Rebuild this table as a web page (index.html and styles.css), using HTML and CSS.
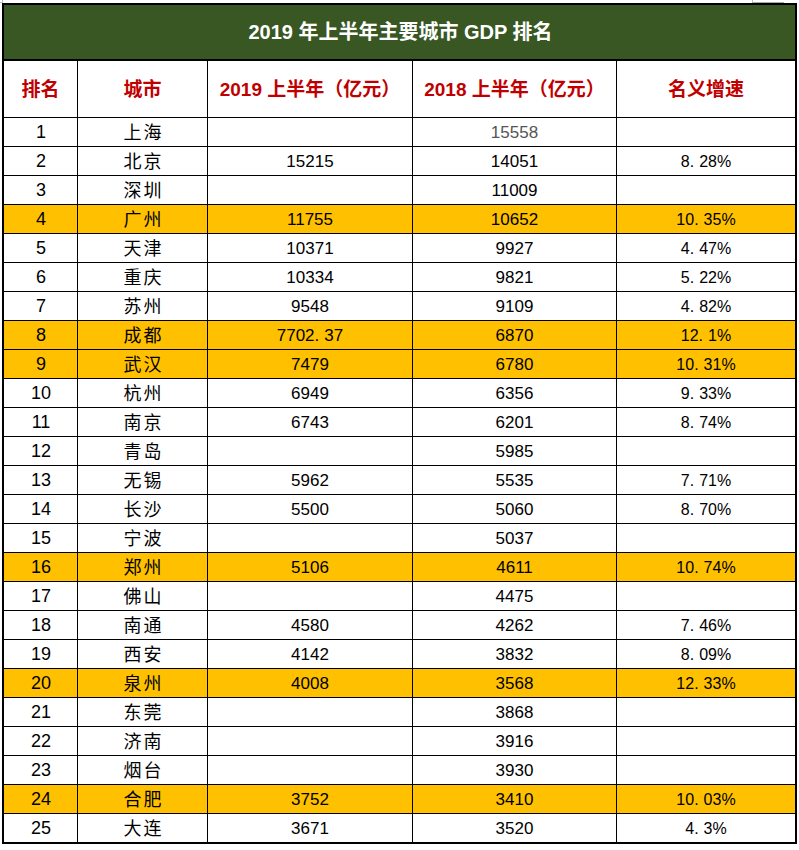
FILE: index.html
```html
<!DOCTYPE html>
<html lang="zh-CN">
<head>
<meta charset="utf-8">
<title>2019 年上半年主要城市 GDP 排名</title>
<link rel="stylesheet" href="styles.css">
</head>
<body>
<div class="mark-left"></div>
<div class="mark-right"></div>
<div class="sheet">
  <div class="title">2019 年上半年主要城市 GDP 排名</div>
  <div class="row head">
    <div class="cell">排名</div>
    <div class="cell">城市</div>
    <div class="cell">2019 上半年（亿元）</div>
    <div class="cell">2018 上半年（亿元）</div>
    <div class="cell">名义增速</div>
  </div>
  <div class="row"><div class="cell rank">1</div><div class="cell city">上海</div><div class="cell num"></div><div class="cell num gray">15558</div><div class="cell pct"></div></div>
  <div class="row"><div class="cell rank">2</div><div class="cell city">北京</div><div class="cell num">15215</div><div class="cell num">14051</div><div class="cell pct">8<span class="dot">.</span>28%</div></div>
  <div class="row"><div class="cell rank">3</div><div class="cell city">深圳</div><div class="cell num"></div><div class="cell num">11009</div><div class="cell pct"></div></div>
  <div class="row hl"><div class="cell rank">4</div><div class="cell city">广州</div><div class="cell num">11755</div><div class="cell num">10652</div><div class="cell pct">10<span class="dot">.</span>35%</div></div>
  <div class="row"><div class="cell rank">5</div><div class="cell city">天津</div><div class="cell num">10371</div><div class="cell num">9927</div><div class="cell pct">4<span class="dot">.</span>47%</div></div>
  <div class="row"><div class="cell rank">6</div><div class="cell city">重庆</div><div class="cell num">10334</div><div class="cell num">9821</div><div class="cell pct">5<span class="dot">.</span>22%</div></div>
  <div class="row"><div class="cell rank">7</div><div class="cell city">苏州</div><div class="cell num">9548</div><div class="cell num">9109</div><div class="cell pct">4<span class="dot">.</span>82%</div></div>
  <div class="row hl"><div class="cell rank">8</div><div class="cell city">成都</div><div class="cell num">7702<span class="dot">.</span>37</div><div class="cell num">6870</div><div class="cell pct">12<span class="dot">.</span>1%</div></div>
  <div class="row hl"><div class="cell rank">9</div><div class="cell city">武汉</div><div class="cell num">7479</div><div class="cell num">6780</div><div class="cell pct">10<span class="dot">.</span>31%</div></div>
  <div class="row"><div class="cell rank">10</div><div class="cell city">杭州</div><div class="cell num">6949</div><div class="cell num">6356</div><div class="cell pct">9<span class="dot">.</span>33%</div></div>
  <div class="row"><div class="cell rank">11</div><div class="cell city">南京</div><div class="cell num">6743</div><div class="cell num">6201</div><div class="cell pct">8<span class="dot">.</span>74%</div></div>
  <div class="row"><div class="cell rank">12</div><div class="cell city">青岛</div><div class="cell num"></div><div class="cell num">5985</div><div class="cell pct"></div></div>
  <div class="row"><div class="cell rank">13</div><div class="cell city">无锡</div><div class="cell num">5962</div><div class="cell num">5535</div><div class="cell pct">7<span class="dot">.</span>71%</div></div>
  <div class="row"><div class="cell rank">14</div><div class="cell city">长沙</div><div class="cell num">5500</div><div class="cell num">5060</div><div class="cell pct">8<span class="dot">.</span>70%</div></div>
  <div class="row"><div class="cell rank">15</div><div class="cell city">宁波</div><div class="cell num"></div><div class="cell num">5037</div><div class="cell pct"></div></div>
  <div class="row hl"><div class="cell rank">16</div><div class="cell city">郑州</div><div class="cell num">5106</div><div class="cell num">4611</div><div class="cell pct">10<span class="dot">.</span>74%</div></div>
  <div class="row"><div class="cell rank">17</div><div class="cell city">佛山</div><div class="cell num"></div><div class="cell num">4475</div><div class="cell pct"></div></div>
  <div class="row"><div class="cell rank">18</div><div class="cell city">南通</div><div class="cell num">4580</div><div class="cell num">4262</div><div class="cell pct">7<span class="dot">.</span>46%</div></div>
  <div class="row"><div class="cell rank">19</div><div class="cell city">西安</div><div class="cell num">4142</div><div class="cell num">3832</div><div class="cell pct">8<span class="dot">.</span>09%</div></div>
  <div class="row hl"><div class="cell rank">20</div><div class="cell city">泉州</div><div class="cell num">4008</div><div class="cell num">3568</div><div class="cell pct">12<span class="dot">.</span>33%</div></div>
  <div class="row"><div class="cell rank">21</div><div class="cell city">东莞</div><div class="cell num"></div><div class="cell num">3868</div><div class="cell pct"></div></div>
  <div class="row"><div class="cell rank">22</div><div class="cell city">济南</div><div class="cell num"></div><div class="cell num">3916</div><div class="cell pct"></div></div>
  <div class="row"><div class="cell rank">23</div><div class="cell city">烟台</div><div class="cell num"></div><div class="cell num">3930</div><div class="cell pct"></div></div>
  <div class="row hl"><div class="cell rank">24</div><div class="cell city">合肥</div><div class="cell num">3752</div><div class="cell num">3410</div><div class="cell pct">10<span class="dot">.</span>03%</div></div>
  <div class="row"><div class="cell rank">25</div><div class="cell city">大连</div><div class="cell num">3671</div><div class="cell num">3520</div><div class="cell pct">4<span class="dot">.</span>3%</div></div>
</div>
</body>
</html>
```
FILE: styles.css
```css
* { box-sizing: border-box; }
html, body { margin: 0; padding: 0; background: #fff; }
body {
  position: relative;
  width: 799px;
  height: 850px;
  overflow: hidden;
  font-family: "Liberation Sans", "Noto Sans CJK SC", sans-serif;
  color: #000;
}
.mark-left {
  position: absolute;
  left: 0; top: 0;
  width: 3px; height: 3px;
  border-right: 1px solid #bbb;
  border-bottom: 1px solid #bbb;
}
.mark-right {
  position: absolute;
  left: 752px; top: 0;
  width: 32px; height: 3px;
  border-left: 1px solid #bbb;
  border-bottom: 1px solid #aaa;
}
.sheet {
  margin: 3px 0 0 2px;
  width: 795px;
  border: 2px solid #000;
  background: #000;
  display: flex;
  flex-direction: column;
  gap: 1px;
}
.title {
  height: 55px;
  border-bottom: 1px solid #000;
  background: #385723;
  color: #fff;
  font-weight: bold;
  font-size: 20px;
  line-height: 1;
  display: flex;
  align-items: center;
  justify-content: center;
  padding-left: 2px;
}
.row {
  display: grid;
  grid-template-columns: 73px 129px 204px 203px 178px;
  column-gap: 1px;
  height: 28px;
}
.row.head { height: 56px; }
.cell {
  background: #fff;
  display: flex;
  align-items: center;
  justify-content: center;
  font-size: 17px;
  line-height: 1;
  white-space: nowrap;
}
.row.hl .cell { background: #ffc000; }
.head .cell {
  color: #c00000;
  font-weight: bold;
  font-size: 19px;
  padding-top: 1px;
}
.city {
  font-family: "Noto Sans CJK SC", sans-serif;
  font-size: 18px;
  letter-spacing: 2px;
  padding-left: 2px;
  padding-bottom: 3px;
}
.rank { padding-left: 1px; font-size: 18px; }
.num { padding-top: 1px; }
.gray { color: #555; }
.pct { font-size: 16px; padding-top: 1px; }
.dot { margin-right: 5px; }
```
